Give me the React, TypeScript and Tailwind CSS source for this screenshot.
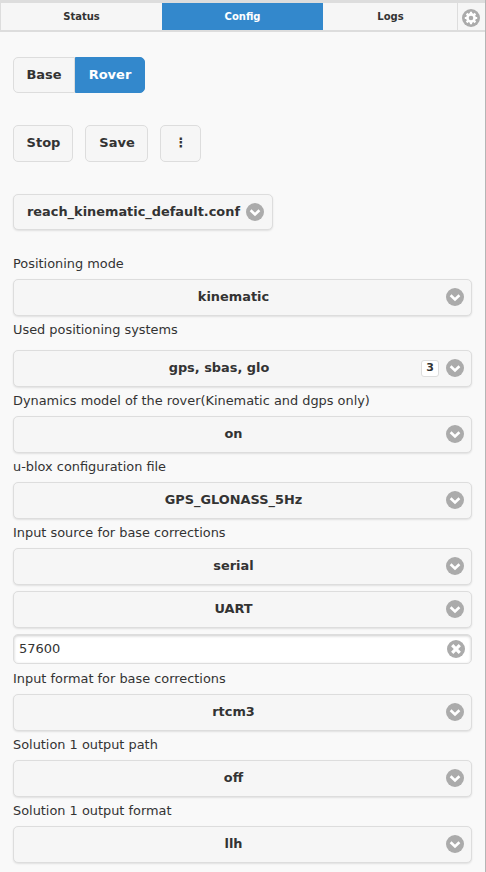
import React from "react";

function ChevronCircle() {
  return (
    <svg width="18" height="18" viewBox="0 0 18 18" className="shrink-0">
      <circle cx="9" cy="9" r="9" fill="#ababab" />
      <path d="M4.6 7.2 9 11.4l4.4-4.2" fill="none" stroke="#fff" strokeWidth="2.6" />
    </svg>
  );
}

function ClearCircle() {
  return (
    <svg width="18" height="18" viewBox="0 0 18 18" className="shrink-0">
      <circle cx="9" cy="9" r="9" fill="#ababab" />
      <path d="M5.2 5.2l7.6 7.6M12.8 5.2l-7.6 7.6" fill="none" stroke="#fff" strokeWidth="3.2" />
    </svg>
  );
}

function GearCircle() {
  return (
    <svg width="18" height="18" viewBox="0 0 18 18">
      <circle cx="9" cy="9" r="9" fill="#ababab" />
      <circle cx="9" cy="9" r="3.6" fill="none" stroke="#fff" strokeWidth="2.6" />
      <path
        d="M9 2.8v2.6M9 12.6v2.6M2.8 9h2.6M12.6 9h2.6M4.6 4.6l1.9 1.9M11.5 11.5l1.9 1.9M13.4 4.6l-1.9 1.9M6.5 11.5l-1.9 1.9"
        fill="none"
        stroke="#fff"
        strokeWidth="2.2"
      />
    </svg>
  );
}

function Label({ text, extra }: { text: string; extra?: boolean }) {
  return (
    <div className={extra ? "pt-[4px] pb-[5px] text-[12.9px] leading-[19px] text-[#333]" : "pt-[4px] text-[12.9px] leading-[19px] text-[#333]"}>
      {text}
    </div>
  );
}

function Select({ value, count }: { value: string; count?: number }) {
  return (
    <div
      className={
        count
          ? "relative mt-[6px] flex h-[37px] items-center justify-center rounded-[5px] border border-[#dddddd] bg-[#f6f6f6] pr-[47px] pb-[2px] shadow-[0_1px_2px_rgba(0,0,0,0.1)]"
          : "relative mt-[6px] flex h-[37px] items-center justify-center rounded-[5px] border border-[#dddddd] bg-[#f6f6f6] pr-[18px] pb-[2px] shadow-[0_1px_2px_rgba(0,0,0,0.1)]"
      }
    >
      <span className="text-[12.9px] font-bold text-[#333]">{value}</span>
      {count ? (
        <span className="absolute right-[32px] top-[9px] flex h-[17px] w-[18px] items-center justify-center rounded-[3px] border border-[#dddddd] bg-white text-[11px] font-bold text-[#333]">
          {count}
        </span>
      ) : null}
      <span className="absolute right-[7px] top-[8px] flex">
        <ChevronCircle />
      </span>
    </div>
  );
}

const btn = "rounded-[5px] border border-[#dddddd] bg-[#f6f6f6] pb-[2px] pl-px text-[13px] font-bold text-[#333]";

export default function App() {
  return (
    <div className="min-h-[872px] overflow-hidden border-r border-[#b5b5b5] bg-[#f9f9f9] font-['DejaVu_Sans',sans-serif]">
      <nav className="flex h-[32px] border-t-[3px] border-b-2 border-[#dddddd] text-[10px] font-bold text-[#333]">
        <div className="flex w-[162px] items-center justify-center border-l border-[#dddddd] bg-[#f6f6f6]">Status</div>
        <div className="flex w-[161px] items-center justify-center bg-[#3388cc] text-white">Config</div>
        <div className="flex w-[135px] items-center justify-center border-r border-[#dddddd] bg-[#f6f6f6] pl-px">Logs</div>
        <div className="flex flex-1 items-start justify-center bg-[#f6f6f6] pt-[6px] pr-px">
          <GearCircle />
        </div>
      </nav>

      <div className="px-[13px]">
        <div className="mt-[25px] flex">
          <button className="h-[36px] w-[62px] rounded-l-[5px] border border-[#dddddd] bg-[#f6f6f6] text-[13px] font-bold text-[#333]">Base</button>
          <button className="h-[36px] w-[70px] rounded-r-[5px] border border-[#3388cc] bg-[#3388cc] text-[13px] font-bold text-white">Rover</button>
        </div>

        <div className="mt-[32px] flex gap-[12px]">
          <button className={`h-[37px] w-[60px] ${btn}`}>Stop</button>
          <button className={`h-[37px] w-[63px] ${btn}`}>Save</button>
          <button className={`h-[37px] w-[41px] ${btn}`}>⋮</button>
        </div>

        <div className="relative mt-[32px] flex h-[36px] w-[260px] items-center rounded-[5px] border border-[#dddddd] bg-[#f6f6f6] pl-[13px] shadow-[0_1px_2px_rgba(0,0,0,0.1)]">
          <span className="text-[12.9px] font-bold text-[#333]">reach_kinematic_default.conf</span>
          <span className="absolute right-[8px] top-[8px] flex">
            <ChevronCircle />
          </span>
        </div>

        <div className="mt-[20px] w-[459px]">
          <Label text="Positioning mode" />
          <Select value="kinematic" />
          <Label text="Used positioning systems" extra />
          <Select value="gps, sbas, glo" count={3} />
          <Label text="Dynamics model of the rover(Kinematic and dgps only)" />
          <Select value="on" />
          <Label text="u-blox configuration file" />
          <Select value="GPS_GLONASS_5Hz" />
          <Label text="Input source for base corrections" />
          <Select value="serial" />
          <Select value="UART" />
          <div className="relative mt-[6px] mb-px flex h-[30px] items-center rounded-[5px] border border-[#dddddd] bg-white pl-[5px] shadow-[inset_0_1px_3px_rgba(0,0,0,0.2)]">
            <span className="text-[13px] text-[#333]">57600</span>
            <span className="absolute right-[6px] top-[5px] flex">
              <ClearCircle />
            </span>
          </div>
          <Label text="Input format for base corrections" />
          <Select value="rtcm3" />
          <Label text="Solution 1 output path" />
          <Select value="off" />
          <Label text="Solution 1 output format" />
          <Select value="llh" />
        </div>
      </div>
    </div>
  );
}
